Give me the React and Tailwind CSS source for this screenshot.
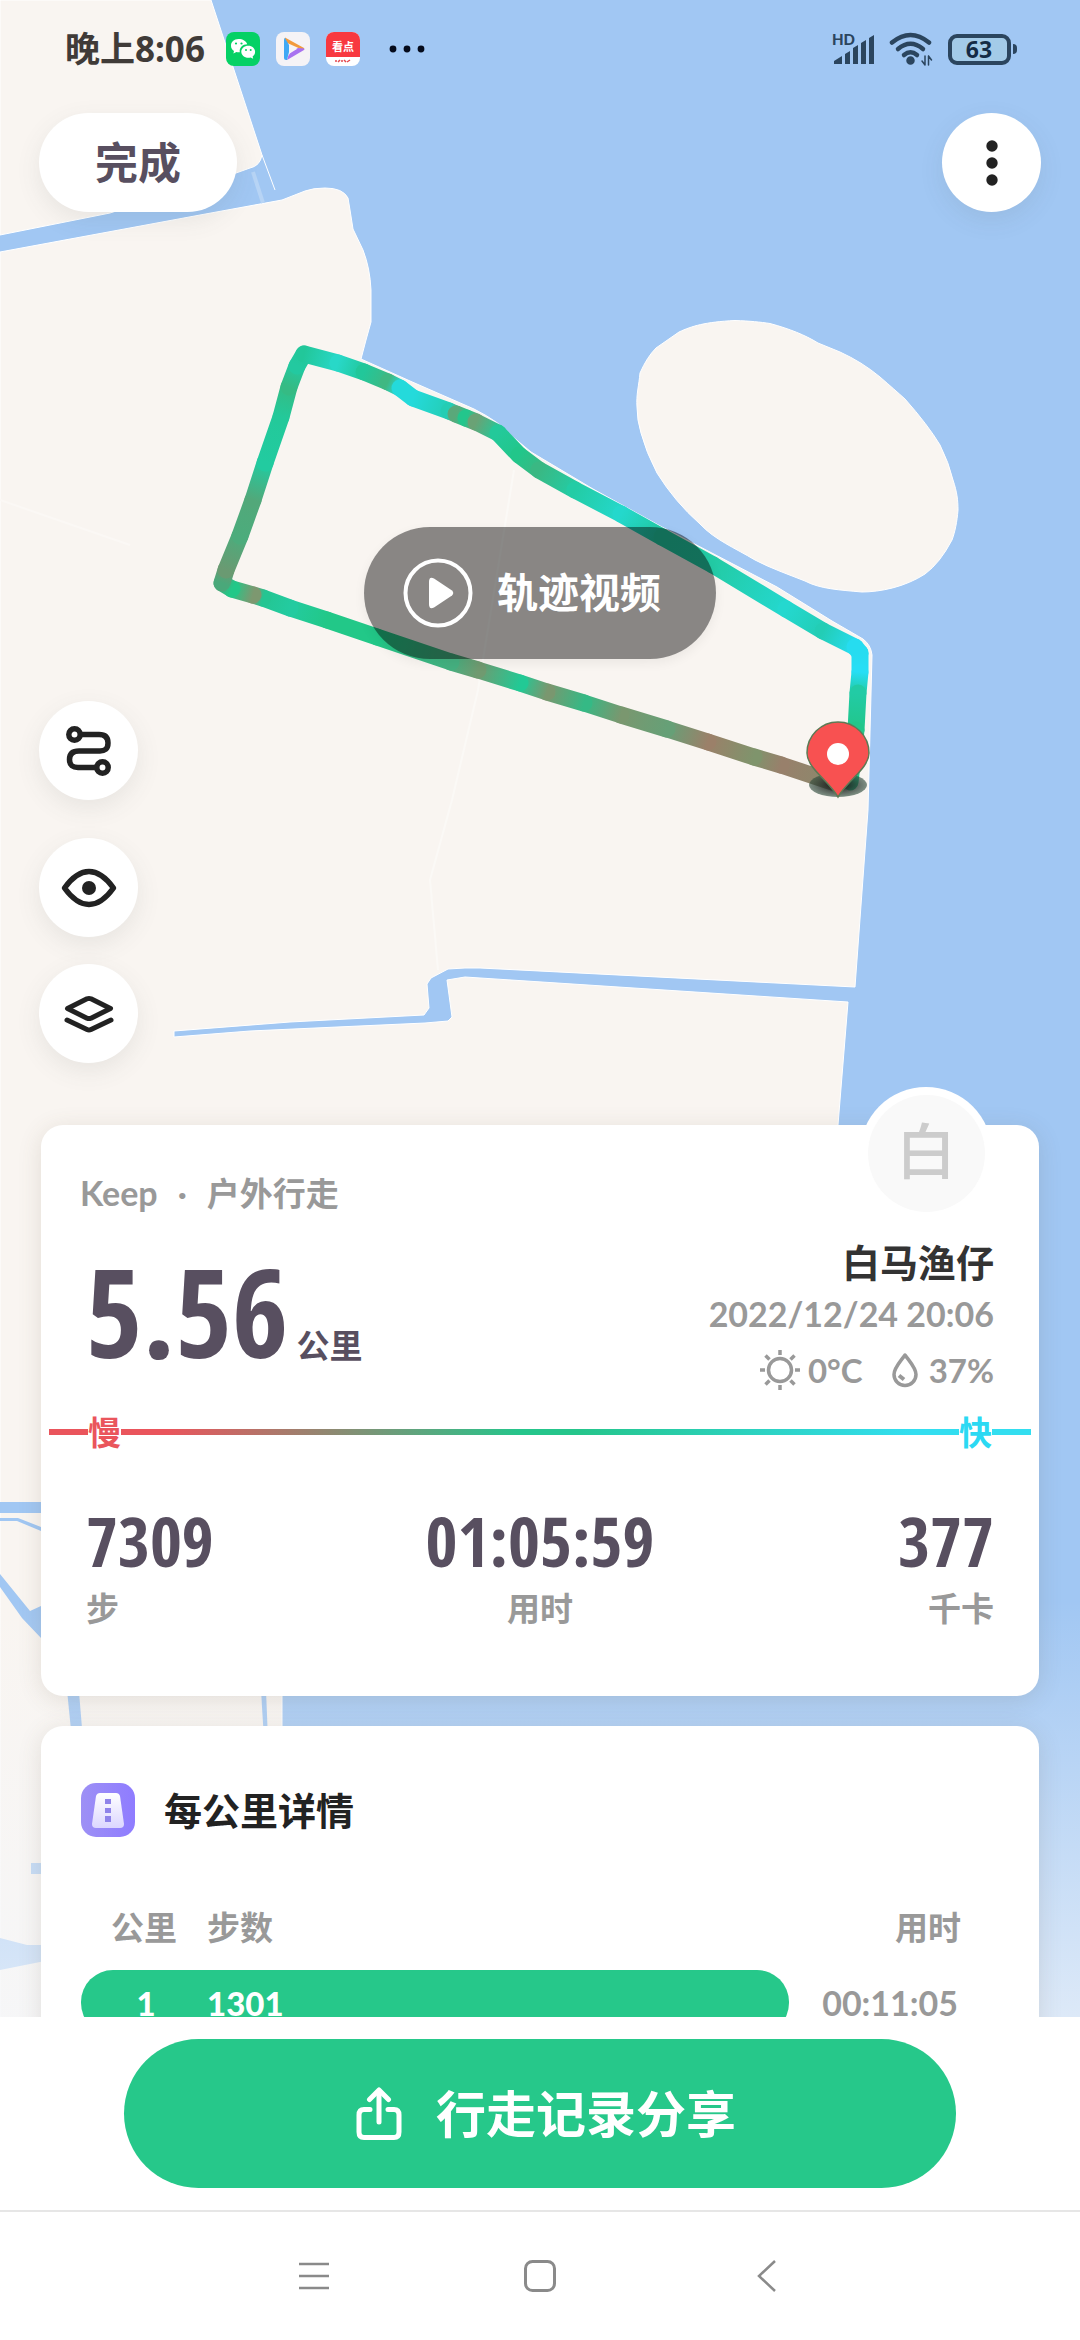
import React from "react";

// Recorded points of the walk: x, y and the pace colour at that point
const track = [
  [838, 784, "#8a8a6c"],
  [781, 765, "#98806b"],
  [754, 757, "#7f946c"],
  [708, 742, "#9b8069"],
  [667, 729, "#66a077"],
  [621, 715, "#7a976f"],
  [584, 703, "#35b985"],
  [547, 692, "#7a976f"],
  [520, 683, "#22c995"],
  [478, 670, "#709a70"],
  [451, 662, "#45b080"],
  [377, 637, "#22c888"],
  [327, 620, "#22c888"],
  [290, 608, "#23cba0"],
  [263, 598, "#24c592"],
  [253, 595, "#7d9870"],
  [232, 589, "#22c888"],
  [222, 583, "#4aa87a"],
  [226, 570, "#6a9a72"],
  [240, 536, "#4cac7c"],
  [253, 500, "#52a87a"],
  [265, 463, "#22cba0"],
  [281, 417, "#23c99a"],
  [289, 387, "#35bb84"],
  [297, 366, "#23c9a0"],
  [304, 354, "#22c79a"],
  [338, 363, "#28d8c8"],
  [364, 372, "#22c79a"],
  [388, 382, "#3fb882"],
  [400, 388, "#24dadb"],
  [413, 398, "#24dadb"],
  [449, 411, "#24cdb4"],
  [456, 414, "#5aa87a"],
  [466, 418, "#23c68c"],
  [476, 422, "#6aa275"],
  [498, 433, "#23c99a"],
  [519, 455, "#22c68a"],
  [539, 470, "#3ab883"],
  [575, 490, "#23cca5"],
  [621, 514, "#24d8cc"],
  [662, 537, "#22c8a0"],
  [713, 565, "#23cba5"],
  [786, 609, "#24d8cf"],
  [823, 631, "#23cdb5"],
  [855, 647, "#26dcf0"],
  [860, 653, "#26dcf0"],
  [860, 672, "#26def5"],
  [858, 693, "#22cba5"],
  [856, 730, "#22c68a"],
  [850, 782, "#22c68a"],
];

const stats = [
  { value: "7309", label: "步", align: "items-start" },
  { value: "01:05:59", label: "用时", align: "items-center" },
  { value: "377", label: "千卡", align: "items-end" },
];

const laps = [{ km: 1, steps: 1301, time: "00:11:05" }];

const Track = () => (
  <g fill="none" strokeWidth="17" strokeLinecap="round">
    {track.slice(1).map(([x, y, color], i) => {
      const [px, py, prevColor] = track[i];
      return (
        <g key={i}>
          <linearGradient
            id={`pace${i}`}
            gradientUnits="userSpaceOnUse"
            x1={px}
            y1={py}
            x2={x}
            y2={y}
          >
            <stop offset="0" stopColor={prevColor} />
            <stop offset="1" stopColor={color} />
          </linearGradient>
          <path d={`M${px} ${py}L${x} ${y}`} stroke={`url(#pace${i})`} />
        </g>
      );
    })}
  </g>
);

const Map = () => (
  <svg
    className="absolute inset-0 h-full w-full"
    viewBox="0 0 1080 2340"
    preserveAspectRatio="xMidYMin slice"
    aria-hidden="true"
  >
    <defs>
      <linearGradient id="fade" x1="0" y1="0" x2="0" y2="1">
        <stop offset="0" stopColor="#f5f7fa" stopOpacity="0" />
        <stop offset="1" stopColor="#f5f7fa" stopOpacity="0.75" />
      </linearGradient>
      <radialGradient id="pinShadow">
        <stop offset="0.3" stopColor="#222" stopOpacity="0.9" />
        <stop offset="1" stopColor="#2c4a3a" stopOpacity="0.6" />
      </radialGradient>
    </defs>
    <rect width="1080" height="2340" fill="#a1c7f3" />
    <g fill="#f9f5f1">
      <path
        d="M0 0H211L262 155Q260 166 250 168L236 173L110 213L0 235Z"
        stroke="#fff"
      />
      <path
        d="M0 252L200 215L282 200L305 191Q313 188 325 188Q343 188 348 198L350 210L353 229L363 250Q370 268 371 290V322L366 340L361 359L410 381L474 409Q500 422 513 437L531 452L593 489L662 527L708 551L777 587L832 621L863 639Q871 645 872 655L868 810L855 987L480 968H465L448 969L431 978L427 984L429 1008L424 1015L290 1022L174 1031V1037L250 1031L425 1023L448 1021L452 1017L447 980L465 977L848 1002L838 1125V1600H282V2040H0Z"
        stroke="#fff"
      />
      <path
        d="M637 407C636 395 639 385 640 373Q647 357 656 348L679 332C692 326 705 322 735 320.500C750 321 760 322 770 323.500C790 329 805 335 818 343L840 352Q862 362 880 377Q895 390 905 399Q928 425 940 445Q949 463 953 480C957 492 958 500 958 510C957 522 955 532 952 540Q940 563 925 574C905 587 880 592 862 592C840 590 820 589 805 581C790 575 770 568 755 560C735 548 715 540 700 524Q675 502 657 473Q646 452 641 433Q637 420 637 407Z"
        stroke="#fff"
      />
    </g>
    <g fill="none" stroke="#fff">
      <path d="M262 155L275 190" />
      <path d="M253 172L263 203" stroke="#b7d4f5" strokeWidth="4" />
      <path
        d="M514 470L478 690L452 800L430 880L438 970"
        stroke="#fbf9f6"
        strokeWidth="2"
      />
      <path d="M0 500L130 545" stroke="#fbf8f5" strokeWidth="2" />
    </g>
    <g fill="#a1c7f3">
      <path d="M0 1502H41V1513H0Z" />
      <path d="M0 1518H18L41 1527V1531L17 1521H0Z" />
      <path d="M0 1574L30 1611L41 1606V1638L22 1618L0 1587Z" />
      <path d="M66 1680H78L83 1740H72Z" />
      <path d="M261 1690H266L268 1740H264Z" />
      <path d="M31 1863H45V1874H31Z" />
      <path d="M0 1938L27 1945H45V1961L0 1970Z" />
    </g>
    <rect y="1600" width="1080" height="440" fill="url(#fade)" />
    <Track />
    <ellipse cx="838" cy="785" rx="29" ry="12" fill="url(#pinShadow)" />
    <path
      d="M838 797C828 780 807 768 807 753A31 31 0 0 1 869 753C869 768 848 780 838 797Z"
      fill="#f85151"
      stroke="#5c7a55"
      strokeWidth="1.500"
    />
    <circle cx="838" cy="754" r="11" fill="#fff" />
  </svg>
);

const StatusBar = () => (
  <div className="flex h-[98px] items-center justify-between pr-[63px] pl-[65px]">
    <div className="flex items-center">
      <span className="w-[161px] font-['Noto_Sans','Noto_Sans_CJK_SC',sans-serif] text-[35px] leading-10 font-bold whitespace-nowrap text-[#403b38]">
        晚上8:06
      </span>
      <div className="flex gap-4">
        <svg className="size-[34px]" viewBox="0 0 34 34">
          <rect width="34" height="34" rx="8" fill="#05d165" />
          <path
            d="M12.500 7C7.800 7 5 10 5 13.700c0 2.300 1.200 4.100 3 5.300l-.6 2.600 3-1.500c1.200.3 2.400.3 3.400.2-.8-4.700 3-8 7.400-8C20.200 9 16.800 7 12.500 7z"
            fill="#fff"
          />
          <path
            d="M22.300 13.800c-4 0-7 2.700-7 6s3 6 7 6c.8 0 1.600-.1 2.300-.4l2.600 1.400-.6-2.300c1.600-1.100 2.500-2.800 2.500-4.700 0-3.300-2.900-6-6.800-6z"
            fill="#fff"
          />
          <g fill="#05d165">
            <circle cx="10" cy="11.500" r="1.100" />
            <circle cx="15.500" cy="11.500" r="1.100" />
            <circle cx="20" cy="18" r="1" />
            <circle cx="24.700" cy="18" r="1" />
          </g>
        </svg>
        <svg className="size-[34px]" viewBox="0 0 34 34">
          <rect width="34" height="34" rx="8" fill="#f5f3f6" />
          <path d="M9 5.500L28 16Q29 17 27 18L9 10Z" fill="#f29a3c" />
          <path d="M28 16.500Q29 17 28 18L11 28Q12 20 22 16Z" fill="#a872f0" />
          <path d="M9 6Q8 6 8 8V26Q8 28.500 11 28L13 20V13Z" fill="#3fa9f5" />
          <path d="M13.500 12.500L21 17L13.500 21.500Z" fill="#f5f3f6" />
        </svg>
        <div className="flex size-[34px] flex-col items-center overflow-hidden rounded-lg bg-white font-['Noto_Sans_CJK_SC',sans-serif] font-bold">
          <span className="h-[25px] w-full bg-[#f8383f] text-center text-[11px] leading-[28px] text-white">
            看点
          </span>
          <svg className="mt-0.5 h-1 w-4" viewBox="0 0 16 4">
            <path
              d="M0 2h2M3 3l2-2M6 2h2M9 1l2 2M12 3l3-2"
              stroke="#e5484d"
              strokeWidth="1.500"
            />
          </svg>
        </div>
      </div>
      <svg className="ml-7 h-2 w-10" viewBox="0 0 40 8" fill="#050b1c">
        <circle cx="5" cy="4" r="3.400" />
        <circle cx="19" cy="4" r="3.400" />
        <circle cx="33" cy="4" r="3.400" />
      </svg>
    </div>
    <div className="flex items-center gap-[15px] text-[#2b455e]">
      <div className="relative h-8 w-[42px]">
        <span className="absolute top-0 left-0 font-['Lato',sans-serif] text-[15px] leading-3 font-black">
          HD
        </span>
        <svg className="h-8 w-[42px]" viewBox="0 0 42 32" fill="currentColor">
          <path d="M2 31v-3l8-5v8zM13 31V21l5-3v13zM21 31V15l5-3v19zM29 31V10l5-3v24zM37 31V5l5-3v29z" />
        </svg>
      </div>
      <svg
        className="h-9 w-[44px]"
        viewBox="0 0 44 36"
        fill="none"
        stroke="currentColor"
        strokeWidth="4.500"
        strokeLinecap="round"
      >
        <path d="M3 11.500Q21.500-3.500 40 11.500" />
        <path d="M9 18Q21.500 7.500 34 18" />
        <path d="M15 24Q21.500 18.500 28 24" />
        <circle cx="21.500" cy="29.500" r="2" fill="currentColor" />
        <path
          d="M36 25v9M36 34l-3-4M39.500 34v-9M39.500 25l3 4"
          strokeWidth="1.500"
        />
      </svg>
      <div className="flex items-center gap-0.5">
        <div className="flex h-[31px] w-[63px] items-center justify-center rounded-[9px] border-4 border-current bg-[#a3cbe8] pr-px">
          <span className="font-['Noto_Sans',sans-serif] text-[23px] leading-6 font-bold text-[#142b45]">
            63
          </span>
        </div>
        <span className="h-2.5 w-1 rounded-r-sm bg-current" />
      </div>
    </div>
  </div>
);

const roundButton =
  "flex size-[99px] items-center justify-center rounded-full bg-white text-[#222] shadow-[0_8px_24px_rgba(80,90,90,0.10)]";

const MapTools = () => (
  <div className="flex flex-col items-start px-[39px] pt-[42px]">
    <button className={roundButton} aria-label="路线">
      <svg
        className="h-[52px] w-[46px]"
        viewBox="0 0 46 52"
        fill="none"
        stroke="currentColor"
        strokeWidth="5.500"
      >
        <circle cx="8.500" cy="9.500" r="5.700" />
        <circle cx="36.500" cy="42.500" r="5.700" />
        <path d="M14 9.500H33Q42 9.500 42 18T33 26H13Q3.500 26 3.500 34.500T13 42.500H31" />
      </svg>
    </button>
    <button className={roundButton + " mt-[38px]"} aria-label="显示">
      <svg
        className="h-10 w-14"
        viewBox="0 0 56 40"
        fill="none"
        stroke="currentColor"
        strokeWidth="5.500"
        strokeLinejoin="round"
      >
        <path d="M3.500 20C10 11 19 3.500 28 3.500S46 11 52.500 20C46 29 37 36.500 28 36.500S10 29 3.500 20Z" />
        <circle cx="28" cy="20" r="7" fill="currentColor" stroke="none" />
      </svg>
    </button>
    <button className={roundButton + " mt-[27px]"} aria-label="图层">
      <svg
        className="h-[38px] w-[50px]"
        viewBox="0 0 50 38"
        fill="none"
        stroke="currentColor"
        strokeWidth="5"
        strokeLinecap="round"
        strokeLinejoin="round"
      >
        <path d="M23 3.800Q25 3 27 3.800L46.500 13.500L27 23.200Q25 24 23 23.200L3.500 13.500Z" />
        <path d="M3 25L23 34.500Q25 35.500 27 34.500L47 25" />
      </svg>
    </button>
  </div>
);

const SpeedBar = () => (
  <div className="mx-2 mt-[18px] grid h-8 items-center text-[33px] leading-8 font-bold">
    <div className="col-start-1 row-start-1 h-1.5 bg-[linear-gradient(90deg,#ea555c_0%,#ea555c_12%,#25c58b_48%,#25c58b_54%,#33def0_88%,#33def0_100%)]" />
    <div className="col-start-1 row-start-1 flex justify-between px-[39px]">
      <span className="bg-white text-[#ea555c]">慢</span>
      <span className="bg-white text-[#2bd9f3]">快</span>
    </div>
  </div>
);

const SummaryCard = () => (
  <section className="relative rounded-[22px] bg-white pt-11 pb-16 shadow-[0_4px_24px_rgba(90,80,60,0.14)]">
    <div className="absolute -top-[38px] right-[47px] flex size-[132px] items-center justify-center rounded-full bg-white">
      <span className="flex size-[117px] items-center justify-center rounded-full bg-[#f9f9f9] pb-1 text-[60px] leading-[60px] font-medium text-[#ccc]">
        白
      </span>
    </div>
    <p className="flex gap-5 px-[39px] text-[33px] leading-[48px] font-bold text-[#999]">
      <span className="text-[34px]">Keep</span>
      <span>·</span>
      <span>户外行走</span>
    </p>
    <div className="mt-[21px] flex justify-between px-[45px]">
      <p className="flex items-baseline gap-2 text-[#584f60]">
        <span className="font-['Open_Sans_Condensed','Roboto_Condensed',sans-serif] text-[122px] leading-[146px] font-bold">
          5.56
        </span>
        <span className="text-[33px] leading-[48px] font-bold">公里</span>
      </p>
      <div className="flex flex-col items-end font-bold text-[#999]">
        <h1 className="text-[38px] leading-[48px] text-[#333]">白马渔仔</h1>
        <time className="text-[34px] leading-[56px]">2022/12/24 20:06</time>
        <p className="flex items-center text-[33px] leading-[56px]">
          <svg
            className="mr-2 size-10"
            viewBox="0 0 40 40"
            fill="none"
            stroke="currentColor"
            strokeWidth="3.500"
          >
            <circle cx="20" cy="20" r="11.500" />
            <path d="M20 0v5M20 35v5M0 20h5M35 20h5M5.500 5.500l4 4M30.500 30.500l4 4M5.500 34.500l4-4M30.500 9.500l4-4" />
          </svg>
          0°C
          <svg
            className="mr-2.5 ml-7 h-9 w-7"
            viewBox="0 0 28 36"
            fill="none"
            stroke="currentColor"
            strokeWidth="3.500"
            strokeLinejoin="round"
          >
            <path d="M14 3C9 10 3 16 3 22.500A11 11 0 0 0 25 22.500C25 16 19 10 14 3Z" />
            <path d="M8 23.500L13 27.500" strokeWidth="4" />
          </svg>
          37%
        </p>
      </div>
    </div>
    <SpeedBar />
    <dl className="mt-[60px] grid grid-cols-3 px-[45px]">
      {stats.map((stat) => (
        <div
          key={stat.label}
          className={"flex flex-col-reverse gap-3 " + stat.align}
        >
          <dt className="text-[33px] leading-[48px] font-bold text-[#999]">
            {stat.label}
          </dt>
          <dd className="font-['Open_Sans_Condensed','Roboto_Condensed',sans-serif] text-[69px] leading-[64px] font-bold text-[#584f60]">
            {stat.value}
          </dd>
        </div>
      ))}
    </dl>
  </section>
);

const LapCard = () => (
  <section className="mt-[30px] rounded-[22px] bg-white px-10 pt-[57px] pb-10 shadow-[0_4px_24px_rgba(90,80,60,0.14)]">
    <h2 className="flex items-center gap-[29px] text-[38px] leading-[54px] font-bold text-[#222]">
      <svg className="size-[54px]" viewBox="0 0 54 54">
        <defs>
          <linearGradient id="tile" x1="0" y1="0" x2="1" y2="0">
            <stop offset="0" stopColor="#9d90f5" />
            <stop offset="1" stopColor="#8f7cff" />
          </linearGradient>
          <linearGradient id="road" x1="0" y1="0" x2="0" y2="1">
            <stop offset="0" stopColor="#fff" />
            <stop offset="1" stopColor="#dcd6ff" />
          </linearGradient>
        </defs>
        <rect width="54" height="54" rx="15" fill="url(#tile)" />
        <path
          d="M19 10H35Q38 10 39 13L43 41Q43 45 39 45H15Q11 45 11 41L15 13Q16 10 19 10Z"
          fill="url(#road)"
        />
        <path d="M24 16h6v5h-6zM24 25h6v5h-6zM24 33h6v6h-6z" fill="#8f83ea" />
      </svg>
      每公里详情
    </h2>
    <table className="mt-[66px] w-full text-[33px] leading-[48px] font-bold text-[#999]">
      <thead>
        <tr>
          <th className="w-[126px] pb-[19px]">公里</th>
          <th className="pb-[19px] text-left">步数</th>
          <th className="w-[210px] pr-[38px] pb-[19px] text-right">用时</th>
        </tr>
      </thead>
      <tbody>
        {laps.map((lap) => (
          <tr key={lap.km} className="h-[65px]">
            <td className="rounded-l-[32px] bg-[#26c88a] pl-1 text-center font-black text-white">
              {lap.km}
            </td>
            <td className="rounded-r-[32px] bg-[#26c88a] text-left font-black text-white">
              {lap.steps}
            </td>
            <td className="pr-[41px] text-right text-[34px]">{lap.time}</td>
          </tr>
        ))}
      </tbody>
    </table>
  </section>
);

const NavBar = () => (
  <nav className="flex h-[130px] items-center justify-center gap-[192px] border-t-2 border-[#e6e6e6] text-[#8a8a8a]">
    <button aria-label="菜单">
      <svg
        className="size-[34px]"
        viewBox="0 0 34 34"
        stroke="currentColor"
        strokeWidth="2.500"
      >
        <path d="M2 5h30M2 17h30M2 29h30" />
      </svg>
    </button>
    <button aria-label="主页">
      <svg
        className="size-[34px]"
        viewBox="0 0 34 34"
        fill="none"
        stroke="currentColor"
        strokeWidth="3"
      >
        <rect x="2.500" y="2.500" width="29" height="29" rx="7" />
      </svg>
    </button>
    <button aria-label="返回">
      <svg
        className="size-[34px]"
        viewBox="0 0 34 34"
        fill="none"
        stroke="currentColor"
        strokeWidth="2.500"
      >
        <path d="M26 2L10 17L26 32" />
      </svg>
    </button>
  </nav>
);

const App = () => {
  return (
    <div className="relative flex h-screen flex-col overflow-hidden font-['Lato','Noto_Sans_CJK_SC',sans-serif]">
      <Map />
      <main className="relative min-h-0 flex-1 overflow-hidden">
        <StatusBar />
        <div className="flex items-center justify-between px-[39px] pt-[15px]">
          <button className="h-[99px] w-[198px] rounded-full bg-white text-[43px] leading-[60px] font-bold text-[#584f60] shadow-[0_8px_24px_rgba(80,90,90,0.10)]">
            完成
          </button>
          <button className={roundButton} aria-label="更多">
            <svg className="h-12 w-3" viewBox="0 0 12 48" fill="currentColor">
              <circle cx="6" cy="7" r="5.700" />
              <circle cx="6" cy="24" r="5.700" />
              <circle cx="6" cy="41" r="5.700" />
            </svg>
          </button>
        </div>
        <div className="flex justify-center pt-[315px]">
          <button className="flex h-[132px] w-[352px] items-center justify-center gap-6 rounded-full bg-black/45 pr-4 text-[41px] leading-[60px] font-bold text-white shadow-[0_4px_12px_rgba(0,0,0,0.06)]">
            <svg className="size-[70px]" viewBox="0 0 70 70">
              <circle
                cx="35"
                cy="35"
                r="32.500"
                fill="none"
                stroke="#fff"
                strokeWidth="4"
              />
              <path
                d="M26 24Q26 18 31 20.500L49 32.500Q51.500 35 49 37.500L31 49.500Q26 52 26 46Z"
                fill="#fff"
              />
            </svg>
            轨迹视频
          </button>
        </div>
        <MapTools />
        <div className="px-[41px] pt-[62px]">
          <SummaryCard />
          <LapCard />
        </div>
      </main>
      <footer className="relative bg-white">
        <div className="flex justify-center px-[124px] py-[22px]">
          <button className="flex h-[149px] w-full items-center justify-center gap-[34px] rounded-full bg-[#26c88a] pl-3 text-[50px] leading-[60px] font-bold text-white">
            <svg
              className="h-[54px] w-[46px]"
              viewBox="0 0 46 54"
              fill="none"
              stroke="currentColor"
              strokeWidth="5"
              strokeLinecap="round"
              strokeLinejoin="round"
            >
              <path d="M14 22.500H8Q3 22.500 3 28V45Q3 50.500 8 50.500H38Q43 50.500 43 45V28Q43 22.500 38 22.500H32" />
              <path d="M23 35V6" />
              <path d="M13.500 12.500L23 3L32.500 12.500" />
            </svg>
            行走记录分享
          </button>
        </div>
        <NavBar />
      </footer>
    </div>
  );
};

export default App;
